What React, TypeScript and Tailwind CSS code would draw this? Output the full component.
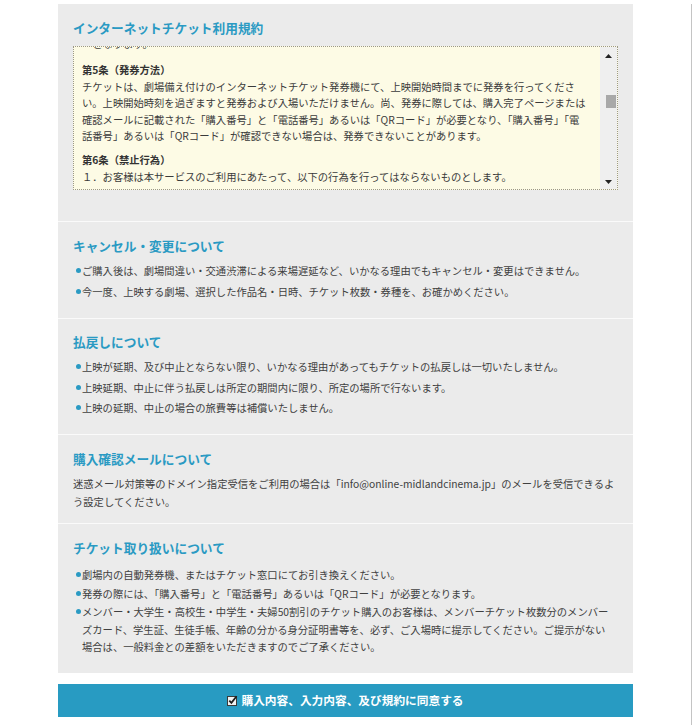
import type { ReactNode } from "react";

const termsLines: { text: string; bold?: boolean }[][] = [
  [{ text: "　となります。" }],
  [
    { text: "第5条（発券方法）", bold: true },
    { text: "チケットは、劇場備え付けのインターネットチケット発券機にて、上映開始時間までに発券を行ってくださ" },
    { text: "い。上映開始時刻を過ぎますと発券および入場いただけません。尚、発券に際しては、購入完了ページまたは" },
    { text: "確認メールに記載された「購入番号」と「電話番号」あるいは「QRコード」が必要となり、「購入番号」「電" },
    { text: "話番号」あるいは「QRコード」が確認できない場合は、発券できないことがあります。" },
  ],
  [
    { text: "第6条（禁止行為）", bold: true },
    { text: "１．お客様は本サービスのご利用にあたって、以下の行為を行ってはならないものとします。" },
  ],
];

function Heading({ children }: { children: ReactNode }) {
  return <h2 className="text-[12.7px] leading-[18px] font-bold text-[#2a9ac3]">{children}</h2>;
}

function Bullet({ lines, gap }: { lines: string[]; gap: string }) {
  return (
    <li className={`flex ${gap}`}>
      <span className="ml-[2.5px] mt-[6px] mr-[1.5px] w-[5px] h-[5px] rounded-full bg-[#2a9ac3] shrink-0" />
      <div>
        {lines.map((line) => (
          <div key={line} className="whitespace-nowrap">
            {line}
          </div>
        ))}
      </div>
    </li>
  );
}

function TermsBox() {
  return (
    <div className="mt-[9px] h-[144px] flex border border-dotted border-[#9c9888] bg-[#fdfbe5]">
      <div className="flex-1 overflow-hidden pl-[8px] text-[10.3px] leading-[16.5px] text-[#3a3a3a]">
        <div className="-mt-[11.5px] mb-[10.25px] whitespace-nowrap">{termsLines[0][0].text}</div>
        {termsLines.slice(1).map((para, i) => (
          <div key={i} className="mb-[7.5px]">
            {para.map((line) => (
              <div key={line.text} className={`whitespace-nowrap ${line.bold ? "font-bold text-[#333]" : ""}`}>
                {line.text}
              </div>
            ))}
          </div>
        ))}
      </div>
      <div className="w-[17px] bg-[#efefef] flex flex-col items-center">
        <svg width="7" height="4" viewBox="0 0 7 4" className="mt-[7px]">
          <path d="M0 4 L3.5 0 L7 4 Z" fill="#222" />
        </svg>
        <div className="mt-[37px] ml-[4px] w-[10px] h-[13px] bg-[#a9a9a9]" />
        <div className="flex-1" />
        <svg width="7" height="4" viewBox="0 0 7 4" className="mb-[5px]">
          <path d="M0 0 L7 0 L3.5 4 Z" fill="#222" />
        </svg>
      </div>
    </div>
  );
}

export default function App() {
  return (
    <div className="h-[725px] bg-white flex font-['Noto_Sans_CJK_JP','Noto_Sans',sans-serif] text-[10.3px] text-[#404040]">
      <div className="ml-[58px] w-[575px] pt-[4px]">
        <div className="bg-[#ebebeb]">
          <section className="px-[15px] pt-[15px] pb-[31px]">
            <Heading>インターネットチケット利用規約</Heading>
            <TermsBox />
          </section>

          <section className="border-t border-[#fafafa] px-[15px] pt-[15px] pb-[17px]">
            <Heading>キャンセル・変更について</Heading>
            <ul className="mt-[7px] leading-[18px]">
              <Bullet gap="mb-[3px]" lines={["ご購入後は、劇場間違い・交通渋滞による来場遅延など、いかなる理由でもキャンセル・変更はできません。"]} />
              <Bullet gap="" lines={["今一度、上映する劇場、選択した作品名・日時、チケット枚数・券種を、お確かめください。"]} />
            </ul>
          </section>

          <section className="border-t border-[#fafafa] px-[15px] pt-[14px] pb-[17px]">
            <Heading>払戻しについて</Heading>
            <ul className="mt-[7px] leading-[18px]">
              <Bullet gap="mb-[2.5px]" lines={["上映が延期、及び中止とならない限り、いかなる理由があってもチケットの払戻しは一切いたしません。"]} />
              <Bullet gap="mb-[2.5px]" lines={["上映延期、中止に伴う払戻しは所定の期間内に限り、所定の場所で行ないます。"]} />
              <Bullet gap="" lines={["上映の延期、中止の場合の旅費等は補償いたしません。"]} />
            </ul>
          </section>

          <section className="border-t border-[#fafafa] px-[15px] pt-[15px] pb-[12px]">
            <Heading>購入確認メールについて</Heading>
            <p className="mt-[7px] leading-[18px]">
              <span className="block whitespace-nowrap">
                迷惑メール対策等のドメイン指定受信をご利用の場合は「info@online-midlandcinema.jp」のメールを受信できるよ
              </span>
              <span className="block whitespace-nowrap">う設定してください。</span>
            </p>
          </section>

          <section className="border-t border-[#fafafa] px-[15px] pt-[15px] pb-[17px]">
            <Heading>チケット取り扱いについて</Heading>
            <ul className="mt-[9px] leading-[17.5px]">
              <Bullet gap="mb-[1px]" lines={["劇場内の自動発券機、またはチケット窓口にてお引き換えください。"]} />
              <Bullet gap="mb-[1px]" lines={["発券の際には、「購入番号」と「電話番号」あるいは「QRコード」が必要となります。"]} />
              <Bullet
                gap=""
                lines={[
                  "メンバー・大学生・高校生・中学生・夫婦50割引のチケット購入のお客様は、メンバーチケット枚数分のメンバー",
                  "ズカード、学生証、生徒手帳、年齢の分かる身分証明書等を、必ず、ご入場時に提示してください。ご提示がない",
                  "場合は、一般料金との差額をいただきますのでご了承ください。",
                ]}
              />
            </ul>
          </section>
        </div>

        <button className="mt-[11px] w-full h-[33px] bg-[#289bc2] flex items-center justify-center gap-[3px] text-white text-[11.7px] font-bold">
          <svg width="11" height="11" viewBox="0 0 11 11">
            <rect x="0.5" y="1.5" width="9" height="9" fill="#f2f2f2" stroke="#3a3a3a" />
            <path d="M2.3 5.6 L4.4 7.8 L9.6 1.2" fill="none" stroke="#1e1e1e" strokeWidth="1.8" />
          </svg>
          <span>購入内容、入力内容、及び規約に同意する</span>
        </button>
      </div>
      <div className="ml-auto mr-[8px] mt-[4px] w-px bg-[#c4c4c4]" />
    </div>
  );
}
